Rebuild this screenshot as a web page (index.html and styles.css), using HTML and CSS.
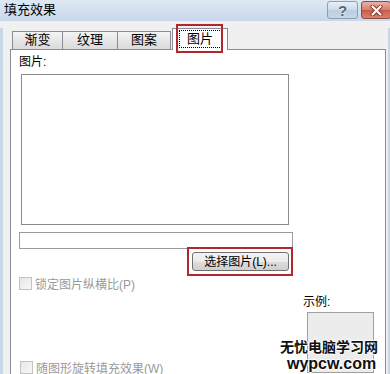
FILE: index.html
```html
<!DOCTYPE html>
<html lang="zh-CN">
<head>
    <meta charset="UTF-8">
    <meta name="viewport" content="width=device-width, initial-scale=1.0">
    <title>填充效果</title>
    <link rel="stylesheet" href="styles.css">
</head>
<body>
    <div class="window">
        <div class="titlebar">
            <span class="title">填充效果</span>
            <div class="caption-buttons">
                <span class="cap-btn help">?</span>
                <span class="cap-btn close">
                    <svg width="13" height="11" viewBox="0 0 13 11">
                        <path d="M2.5 1.5L10.5 9.5M10.5 1.5L2.5 9.5" stroke="#8a3426" stroke-width="4" stroke-linecap="round"/>
                        <path d="M2.5 1.5L10.5 9.5M10.5 1.5L2.5 9.5" stroke="#ffffff" stroke-width="2.2" stroke-linecap="round"/>
                    </svg>
                </span>
            </div>
        </div>

        <div class="client">
            <div class="tabs">
                <div class="tab">渐变</div>
                <div class="tab tab-wide">纹理</div>
                <div class="tab tab-mid">图案</div>
                <div class="tab selected">
                    <span class="focus">图片</span>
                    <span class="mark mark-tab"></span>
                </div>
            </div>

            <div class="panel">
                <div class="left">
                    <div class="label">图片:</div>
                    <div class="picture-box"></div>
                    <div class="path-field"></div>
                    <div class="btn-wrap">
                        <button class="btn">选择图片(L)...</button>
                        <span class="mark mark-btn"></span>
                    </div>
                    <div class="check">
                        <span class="box"></span>
                        <span>锁定图片纵横比(P)</span>
                    </div>
                    <div class="check check-rotate">
                        <span class="box"></span>
                        <span>随图形旋转填充效果(W)</span>
                    </div>
                </div>
                <div class="right">
                    <div class="label sample-label">示例:</div>
                    <div class="sample"></div>
                </div>
            </div>
        </div>

        <div class="watermark">
            <div class="wm-cn">无忧电脑学习网</div>
            <div class="wm-en">wypcw.com</div>
        </div>
    </div>
</body>
</html>
```

FILE: styles.css
```css
* {
    box-sizing: border-box;
}

body {
    margin: 0;
    font-family: "Liberation Sans", "Noto Sans CJK SC", sans-serif;
    font-size: 12px;
    color: #000;
}

.window {
    position: relative;
    width: 390px;
    height: 374px;
    overflow: hidden;
    background: #f0f0f0;
}

/* title bar */
.titlebar {
    height: 21px;
    display: flex;
    justify-content: space-between;
    background: linear-gradient(to bottom, #dde8f4, #c8d8ea);
}

.title {
    padding-left: 4px;
    font-size: 13px;
    line-height: 20px;
}

.caption-buttons {
    display: flex;
    gap: 3px;
    margin-top: 1px;
    margin-right: -1px;
}

.cap-btn {
    height: 18px;
    display: flex;
    justify-content: center;
    align-items: center;
    border-radius: 3px;
}

.help {
    width: 31px;
    border: 1px solid #8c9db4;
    background: linear-gradient(to bottom, #e9f0f8, #cad9ea 50%, #bccde2 51%, #c7d6e8);
    color: #56657c;
    font-weight: bold;
    font-size: 15px;
    text-shadow: 0 0 2px #fff;
}

.close {
    width: 30px;
    border: 1px solid #8f4a3e;
    background: linear-gradient(to bottom, #eab1a6, #d77c6b 50%, #c85a47 51%, #d9826f);
}

/* dialog body */
.client {
    height: 353px;
    border-left: 3px solid #c9d6e6;
    border-right: 2px solid #c9d6e6;
    padding: 0 2px 0 7px;
}

.tabs {
    display: flex;
    align-items: flex-end;
    height: 21px;
    margin-top: 7px;
    padding-left: 2px;
}

.tab {
    width: 51px;
    height: 18px;
    margin-right: -1px;
    border: 1px solid #898c95;
    border-bottom: none;
    background: linear-gradient(to bottom, #f4f4f4, #e6e6e6 50%, #dadada);
    text-align: center;
    line-height: 16px;
    font-size: 13px;
}

.tab-wide {
    width: 56px;
}

.tab-mid {
    width: 54px;
}

.tab.selected {
    position: relative;
    z-index: 1;
    width: 56px;
    height: 22px;
    margin-left: 2px;
    margin-bottom: -1px;
    background: #fff;
    padding-top: 1px;
}

.focus {
    display: block;
    width: 43px;
    height: 18px;
    margin: 0 auto;
    border: 1px dotted #000;
    line-height: 16px;
}

.mark {
    position: absolute;
    border: 2px solid #b3262b;
}

.mark-tab {
    left: 3px;
    top: -5px;
    width: 47px;
    height: 29px;
}

.panel {
    display: flex;
    height: 340px;
    border: 1px solid #898c95;
    background: #fff;
    padding: 5px 0 0 8px;
}

.left {
    width: 274px;
}

.label {
    height: 14px;
    line-height: 14px;
}

.picture-box {
    width: 268px;
    height: 151px;
    margin-top: 5px;
    margin-left: 2px;
    border: 1px solid #8a8a8a;
}

.path-field {
    height: 17px;
    margin-top: 7px;
    border: 1px solid #9a9a9a;
}

.btn-wrap {
    position: relative;
    width: 97px;
    height: 19px;
    margin-top: 3px;
    margin-left: 173px;
}

.btn {
    width: 100%;
    height: 100%;
    padding: 0;
    border: 1px solid #707070;
    border-radius: 3px;
    background: linear-gradient(to bottom, #f3f3f3, #ebebeb 50%, #dddddd 51%, #cfcfcf);
    font-family: inherit;
    font-size: 12px;
    line-height: 16px;
    color: #000;
}

.mark-btn {
    left: -5px;
    top: -5px;
    width: 106px;
    height: 29px;
}

.check {
    display: flex;
    align-items: center;
    gap: 3px;
    height: 14px;
    margin-top: 5px;
    color: #9a9a9a;
}

.check-rotate {
    margin-top: 70px;
    padding-left: 1px;
}

.box {
    width: 13px;
    height: 13px;
    border: 1px solid #c2c2c2;
    background: linear-gradient(135deg, #e6e6e6, #f8f8f8);
}

.right {
    margin-left: 10px;
}

.sample-label {
    margin-top: 240px;
}

.sample {
    width: 67px;
    height: 61px;
    margin-top: 3px;
    margin-left: 4px;
    border: 1px solid #a0a0a0;
    background: #ececec;
}

/* site watermark over the sample box */
.watermark {
    position: absolute;
    left: 280px;
    top: 339px;
    font-weight: bold;
    color: #111;
    text-shadow: 1px 0 0 #fff, -1px 0 0 #fff, 0 1px 0 #fff, 0 -1px 0 #fff;
}

.wm-cn {
    font-family: "Noto Sans CJK SC", sans-serif;
    font-size: 14px;
    line-height: 15px;
}

.wm-en {
    margin-top: 1px;
    margin-left: 7px;
    font-size: 16px;
    line-height: 17px;
}
```
